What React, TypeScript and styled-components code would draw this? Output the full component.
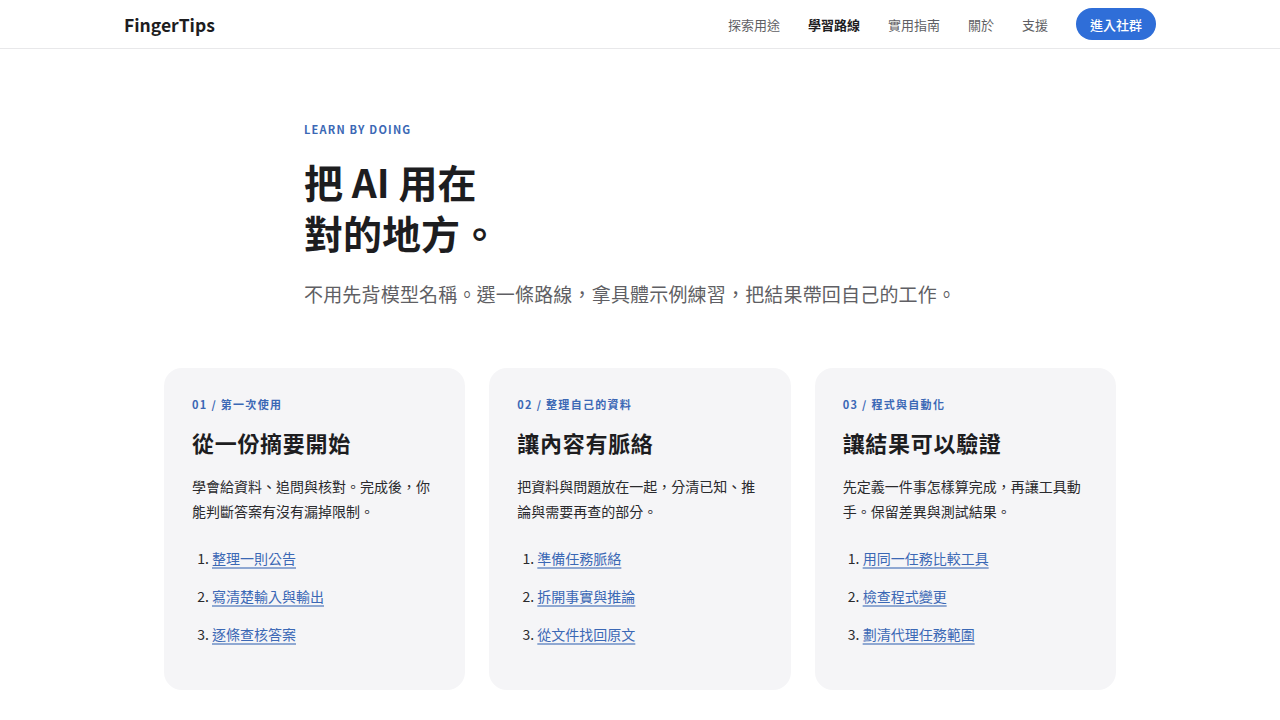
import React from "react";
import styled, { createGlobalStyle } from "styled-components";

const GlobalStyle = createGlobalStyle`
  * { box-sizing: border-box; }
  body {
    margin: 0;
    background: #ffffff;
    color: #1d1d1f;
    font-family: "Noto Sans CJK TC", "Noto Sans", sans-serif;
  }
`;

const Header = styled.header`
  height: 49px;
  border-bottom: 1px solid #e8e8ea;
`;

const HeaderInner = styled.div`
  width: 1032px;
  height: 100%;
  margin: 0 auto;
  display: flex;
  align-items: center;
  justify-content: space-between;
`;

const Logo = styled.div`
  font-size: 17.5px;
  font-weight: 700;
  color: #1d1d1f;
`;

const Nav = styled.nav`
  display: flex;
  align-items: center;
  gap: 28px;
`;

const NavLink = styled.a<{ active?: boolean }>`
  font-size: 13px;
  color: ${({ active }) => (active ? "#1d1d1f" : "#5f5f64")};
  font-weight: ${({ active }) => (active ? 700 : 400)};
  text-decoration: none;
`;

const JoinButton = styled.a`
  height: 32px;
  padding: 0 14px;
  border-radius: 16px;
  background: #2f6ed8;
  color: #ffffff;
  font-size: 13px;
  font-weight: 500;
  display: flex;
  align-items: center;
  text-decoration: none;
`;

const Hero = styled.section`
  width: 672px;
  margin: 0 auto;
  padding-top: 72px;
`;

const Eyebrow = styled.div`
  font-size: 11px;
  font-weight: 700;
  letter-spacing: 1.2px;
  color: #3b68b5;
  line-height: 16px;
`;

const Title = styled.h1`
  margin: 19px 0 0;
  font-size: 39px;
  line-height: 51px;
  font-weight: 700;
  color: #1d1d1f;
`;

const Lead = styled.p`
  margin: 21px 0 0;
  font-size: 19px;
  line-height: 30px;
  letter-spacing: 0.18px;
  color: #5f5f64;
`;

const Cards = styled.section`
  width: 952px;
  margin: 59px auto 0;
  display: grid;
  grid-template-columns: repeat(3, 1fr);
  gap: 24px;
`;

const Card = styled.article`
  background: #f5f5f7;
  border-radius: 18px;
  padding: 28px 28px 44px;
`;

const CardLabel = styled.div`
  font-size: 11px;
  font-weight: 700;
  letter-spacing: 1.3px;
  line-height: 16px;
  color: #3b68b5;
`;

const CardTitle = styled.h2`
  margin: 15px 0 0;
  font-size: 22px;
  line-height: 30px;
  letter-spacing: 0.7px;
  font-weight: 700;
  color: #1d1d1f;
`;

const CardText = styled.p`
  margin: 17px 0 0;
  font-size: 14px;
  line-height: 25px;
  color: #2a2a2d;
`;

const Steps = styled.ol`
  margin: 22px 0 0;
  padding-left: 20px;
  display: flex;
  flex-direction: column;
  gap: 14px;
  font-size: 14px;
  line-height: 24px;
  color: #2a2a2d;
`;

const StepLink = styled.a`
  color: #3b68b5;
  text-decoration: underline;
  text-decoration-color: rgba(59, 104, 181, 0.55);
  text-decoration-thickness: 2px;
  text-underline-offset: 3px;
`;

const navItems = ["探索用途", "學習路線", "實用指南", "關於", "支援"];

const cards = [
  {
    label: "01 / 第一次使用",
    title: "從一份摘要開始",
    text: "學會給資料、追問與核對。完成後，你能判斷答案有沒有漏掉限制。",
    steps: ["整理一則公告", "寫清楚輸入與輸出", "逐條查核答案"],
  },
  {
    label: "02 / 整理自己的資料",
    title: "讓內容有脈絡",
    text: "把資料與問題放在一起，分清已知、推論與需要再查的部分。",
    steps: ["準備任務脈絡", "拆開事實與推論", "從文件找回原文"],
  },
  {
    label: "03 / 程式與自動化",
    title: "讓結果可以驗證",
    text: "先定義一件事怎樣算完成，再讓工具動手。保留差異與測試結果。",
    steps: ["用同一任務比較工具", "檢查程式變更", "劃清代理任務範圍"],
  },
];

export default function App() {
  return (
    <>
      <GlobalStyle />
      <Header>
        <HeaderInner>
          <Logo>FingerTips</Logo>
          <Nav>
            {navItems.map((item) => (
              <NavLink key={item} href="#" active={item === "學習路線"}>
                {item}
              </NavLink>
            ))}
            <JoinButton href="#">進入社群</JoinButton>
          </Nav>
        </HeaderInner>
      </Header>
      <Hero>
        <Eyebrow>LEARN BY DOING</Eyebrow>
        <Title>
          把 AI 用在
          <br />
          對的地方。
        </Title>
        <Lead>不用先背模型名稱。選一條路線，拿具體示例練習，把結果帶回自己的工作。</Lead>
      </Hero>
      <Cards>
        {cards.map((c) => (
          <Card key={c.label}>
            <CardLabel>{c.label}</CardLabel>
            <CardTitle>{c.title}</CardTitle>
            <CardText>{c.text}</CardText>
            <Steps>
              {c.steps.map((s) => (
                <li key={s}>
                  <StepLink href="#">{s}</StepLink>
                </li>
              ))}
            </Steps>
          </Card>
        ))}
      </Cards>
    </>
  );
}
